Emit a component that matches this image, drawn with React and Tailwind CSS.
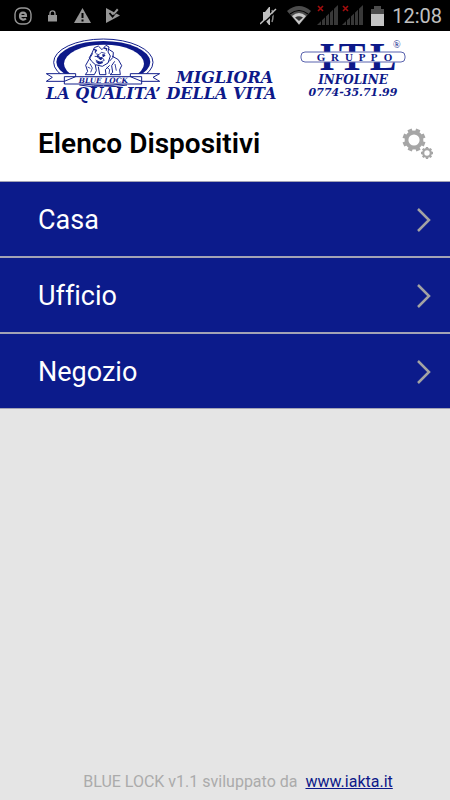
const devices = ["Casa", "Ufficio", "Negozio"];

const SignalIcon = () => (
  <svg viewBox="0 0 21 21" className="w-[21px] h-[21px]" aria-hidden="true">
    <path d="M0 20L21 0V20Z" fill="#383838" />
    <path d="M4.500 8V21M8.500 5V21M12.500 3V21M16.500 0V21" stroke="#000" strokeWidth="1" />
    <path d="M0 0H8V8H0Z" fill="#000" />
    <path d="M1 1L6 6M6 1L1 6" stroke="#a30d0d" strokeWidth="1.600" />
  </svg>
);

const StatusBar = () => (
  <div className="h-[31px] bg-black flex items-center justify-between pl-[14px] pr-2">
    <div className="flex items-center">
      <svg viewBox="0 0 18 18" className="w-[18px] h-[18px]" aria-hidden="true">
        <rect x="1" y="1" width="16" height="16" rx="6" fill="none" stroke="#969696" strokeWidth="1.400" />
        <path d="M6 9H12C12 4.400 6 4.400 6 9C6 13 10 13.200 12 11.500" fill="none" stroke="#969696" strokeWidth="2.200" />
      </svg>
      <svg viewBox="0 0 10 12" className="w-[10px] h-3 ml-4" aria-hidden="true">
        <path d="M0 5H9V11.500H0Z" fill="#969696" />
        <path d="M2 6V3.500C2 0 7 0 7 3.500V6" fill="none" stroke="#969696" strokeWidth="1.400" />
      </svg>
      <svg viewBox="0 0 17 15" className="w-[17px] h-[15px] ml-4" aria-hidden="true">
        <path d="M8.500 0L17 15H0Z" fill="#969696" />
        <path d="M8.500 5V10M8.500 11.500V13.500" stroke="#000" strokeWidth="2" />
      </svg>
      <svg viewBox="0 0 15 15" className="w-[15px] h-[15px] ml-[15px]" aria-hidden="true">
        <path d="M0 0L14 7.500L0 15Z" fill="#969696" />
        <path d="M3.500 5L6.500 8.500L12 2" fill="none" stroke="#000" strokeWidth="1.800" />
        <path d="M6.500 6L11 0.500L12.500 2L8 7Z" fill="#969696" />
      </svg>
    </div>
    <div className="flex items-center">
      <svg viewBox="0 0 17 20" className="w-[17px] h-5 mr-[10px]" aria-hidden="true">
        <path d="M3 6H5L9 1H10V19H9L5 14H3Z" fill="#c0c0c0" />
        <path d="M12 4Q14 10 12 16" fill="none" stroke="#888" strokeWidth="1.500" />
        <path d="M1 19.500L17 4.500" stroke="#000" strokeWidth="1.500" />
        <path d="M0 18L16 3" stroke="#c0c0c0" strokeWidth="1.500" />
      </svg>
      <svg viewBox="0 0 24 19" className="w-6 h-[19px] mr-[6px]" aria-hidden="true">
        <path d="M0 5Q12 -5 24 5L12 19Z" fill="#4c4c4c" />
        <path d="M3 8Q12 1 21 8" fill="none" stroke="#000" strokeWidth="1.200" />
        <path d="M5 10Q12 4 19 10L12 18.500Z" fill="#c8c8c8" />
        <path d="M8 11.500Q12 9 16 11.500L12 15Z" fill="#333" />
      </svg>
      <SignalIcon />
      <span className="w-1" />
      <SignalIcon />
      <svg viewBox="0 0 13 20" className="w-[13px] h-5 ml-2" aria-hidden="true">
        <path d="M3 0H10V3H13V9H0V3H3Z" fill="#4c4c4c" />
        <path d="M0 8H13V20H0Z" fill="#c4c4c4" />
      </svg>
      <span className="ml-2 text-[20px] leading-6 text-[#c0c0c0]">12:08</span>
    </div>
  </div>
);

const BlueLockLogo = () => (
  <svg viewBox="33 18 342 150" className="w-[114px] h-[50px]" role="img" aria-label="Blue Lock">
    <g fill="none" stroke="#14208c" strokeWidth="3">
      <ellipse cx="205" cy="94" rx="149" ry="70" fill="#fff" />
      <ellipse cx="205" cy="93" rx="141" ry="63" fill="#0d1989" stroke="none" />
      <ellipse cx="207" cy="98" rx="120" ry="57" fill="#fff" stroke="none" />
      {/* bulldog */}
      <path d="M171 66L178 50L190 45L201 56L213 43L222 48L219 63L226 75L219 96L202 106L181 101L170 91L163 80Z" />
      <path d="M173 67L161 87L152 103L158 121L151 131H178L184 119L181 102" />
      <path d="M190 107L194 131H213L211 116L224 103" />
      <path d="M220 54L235 64L234 79L223 91M231 75L250 86L260 104L254 116L256 131H225L233 124L230 104L239 91" />
      <path d="M182 68L192 71L199 64L211 67M179 76L188 77M203 76L211 74M191 82L201 79L208 88L195 94L182 87M165 98L172 111L167 124M158 108L166 112M215 108L224 116L222 129M240 99L244 119" strokeWidth="2.500" />
      <path d="M187 73L193 76L188 79ZM203 71L210 72L205 77ZM191 80L202 81L197 87ZM184 92L203 95L191 99Z" fill="#14208c" />
      <path d="M177 55L184 58L180 65M207 51L215 53L214 59" strokeWidth="4" />
      {/* ribbon */}
      <path d="M122 137V128H34L52 139L34 151H88M286 137V128H374L354 139L374 151H320" fill="#fff" />
      <path d="M88 137H320V159H88ZM88 151L122 137M320 151L286 137" fill="#fff" />
      <path d="M133 162Q204 174 276 162" />
    </g>
    <text
      x="205"
      y="156"
      textAnchor="middle"
      fontSize="22"
      fill="#14208c"
      className="font-bold italic font-['DejaVu_Serif',serif]"
    >
      BLUE LOCK
    </text>
  </svg>
);

const ItlLogo = () => (
  <svg viewBox="0 0 106 32" className="w-[106px] h-8 overflow-visible not-italic" role="img" aria-label="Gruppo ITL">
    <g fill="#0d1989" className="font-['Liberation_Serif',serif]">
      <g fontSize="40" className="font-bold" textAnchor="middle">
        <text x="27" y="29">I</text>
        <text x="52" y="29">T</text>
        <text x="83" y="29">L</text>
      </g>
      <rect x="1" y="11" width="104" height="10" rx="4" fill="#fff" stroke="#5962ae" strokeWidth="1" />
      <g fontSize="11" className="font-bold" textAnchor="middle">
        <text x="21" y="20">G</text>
        <text x="35" y="20">R</text>
        <text x="49" y="20">U</text>
        <text x="62" y="20">P</text>
        <text x="74" y="20">P</text>
        <text x="88" y="20">O</text>
      </g>
      <text x="93" y="7" fontSize="10" className="font-normal">®</text>
    </g>
  </svg>
);

const Banner = () => (
  <div className="flex justify-between pl-[46px] pr-11 pt-[6px] text-[#0d1989] font-bold italic whitespace-nowrap font-['DejaVu_Serif',serif]">
    <div>
      <div className="flex items-end h-[50px]">
        <BlueLockLogo />
        <span className="ml-4 text-[16px] leading-[18px]">MIGLIORA</span>
      </div>
      <div className="text-[16px] leading-4 -mt-px">LA QUALITA’ DELLA VITA</div>
    </div>
    <div className="flex flex-col items-center pt-1">
      <ItlLogo />
      <span className="text-[12px] leading-[14px]">INFOLINE</span>
      <span className="text-[11px] leading-3">0774-35.71.99</span>
    </div>
  </div>
);

const GearsIcon = () => (
  <svg viewBox="0 0 32 32" className="w-8 h-8" fill="none" stroke="#a6a6a6" aria-hidden="true">
    <circle cx="12" cy="12" r="7.500" strokeWidth="3.800" />
    {[22, 67, 112, 157, 202, 247, 292, 337].map((a) => (
      <path key={a} d="M12 0.500V4" strokeWidth="4.500" transform={`rotate(${a} 12 12)`} />
    ))}
    <circle cx="25" cy="25" r="3.800" strokeWidth="2.200" />
    {[0, 45, 90, 135, 180, 225, 270, 315].map((a) => (
      <path key={a} d="M25 19V21" strokeWidth="2.300" transform={`rotate(${a} 25 25)`} />
    ))}
  </svg>
);

const DeviceRow = ({ name }) => (
  <li className="border-b-2 border-[#a3a3b5] last:border-b">
    <button type="button" className="w-full h-[74px] flex items-center justify-between pl-[38px] pr-[18px] pt-px text-white text-[27px] leading-8 text-left">
      <span className="[font-variant-ligatures:none]">{name}</span>
      <svg viewBox="0 0 16 26" className="w-4 h-[26px]" aria-hidden="true">
        <path d="M2 2L13 13L2 24" fill="none" stroke="#a3a3a3" strokeWidth="2.500" />
      </svg>
    </button>
  </li>
);

const App = () => {
  return (
    <div className="min-h-screen flex flex-col bg-[#e5e5e5] font-[Roboto,sans-serif]">
      <StatusBar />
      <header className="bg-white">
        <Banner />
        <div className="flex items-center justify-between h-[79px] pl-[38px] pr-4 pt-1">
          <h1 className="text-[28px] leading-8 font-semibold text-black">Elenco Dispositivi</h1>
          <button type="button" aria-label="Impostazioni">
            <GearsIcon />
          </button>
        </div>
      </header>
      <ul className="bg-[#0c1b8b] border-t border-[#a3a3b5]">
        {devices.map((name) => (
          <DeviceRow key={name} name={name} />
        ))}
      </ul>
      <footer className="mt-auto flex justify-center gap-2 pl-[26px] pb-2 text-[16px] leading-5 text-[#ababab]">
        <span>BLUE LOCK v1.1 sviluppato da</span>
        <a href="#" className="text-[#0d1989] underline">
          www.iakta.it
        </a>
      </footer>
    </div>
  );
};

export default App;
